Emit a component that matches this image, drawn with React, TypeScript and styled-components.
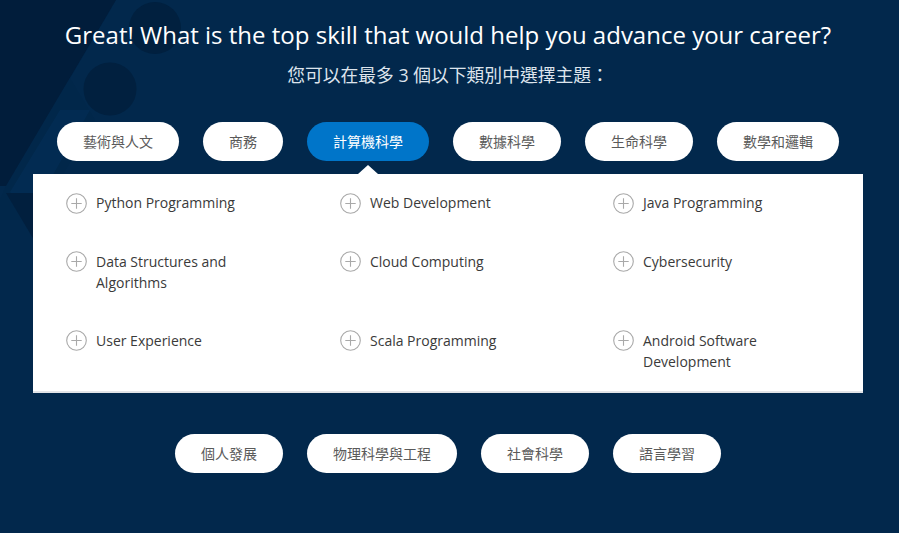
import React from "react";
import styled, { createGlobalStyle } from "styled-components";

const GlobalStyle = createGlobalStyle`
  html, body { margin: 0; padding: 0; }
  body {
    background: #02284c;
    font-family: "Open Sans", "Noto Sans CJK TC", sans-serif;
    -webkit-font-smoothing: antialiased;
  }
`;

const Page = styled.div`
  position: relative;
  width: 899px;
  height: 533px;
  overflow: hidden;
  background: #02284c;
  display: flex;
  flex-direction: column;
  align-items: center;
  padding-top: 18px;
  box-sizing: border-box;
`;

const Decor = styled.svg`
  position: absolute;
  left: 0;
  top: 0;
  pointer-events: none;
`;

const Content = styled.div`
  position: relative;
  display: flex;
  flex-direction: column;
  align-items: center;
  margin-left: -3px;
`;

const Title = styled.h1`
  margin: 0;
  color: #ffffff;
  font-family: "Open Sans", sans-serif;
  font-weight: 400;
  font-size: 24px;
  line-height: 34px;
`;

const Subtitle = styled.p`
  margin: 11px 0 0;
  color: #dde4ec;
  font-family: "Open Sans", "Noto Sans CJK TC", sans-serif;
  font-size: 17.8px;
  line-height: 24px;
`;

const PillRow = styled.div<{ $top: number }>`
  display: flex;
  gap: 24px;
  justify-content: center;
  margin-top: ${(p) => p.$top}px;
`;

const Pill = styled.button<{ $active?: boolean }>`
  position: relative;
  height: 39px;
  padding: 0 26px;
  border: none;
  border-radius: 20px;
  background: ${(p) => (p.$active ? "#0075c9" : "#ffffff")};
  color: ${(p) => (p.$active ? "#ffffff" : "#5a5a5a")};
  font-family: "Noto Sans CJK TC", sans-serif;
  font-size: 14px;
  font-weight: 400;
  line-height: 39px;
  white-space: nowrap;
  cursor: pointer;

  ${(p) =>
    p.$active &&
    `
    &::after {
      content: "";
      position: absolute;
      left: 50%;
      top: calc(100% + 4px);
      margin-left: -10px;
      border-left: 10px solid transparent;
      border-right: 10px solid transparent;
      border-bottom: 9px solid #ffffff;
    }
  `}
`;

const Panel = styled.div`
  margin-top: 13px;
  width: 830px;
  box-sizing: border-box;
  background: #ffffff;
  border-bottom: 2px solid #e2e4e8;
  padding: 18px 33px 19px;
  display: grid;
  grid-template-columns: 274px 273px 1fr;
  row-gap: 37px;
`;

const Item = styled.div`
  display: flex;
  align-items: flex-start;
  gap: 9px;
  max-width: 200px;
`;

const PlusIcon = styled.svg`
  flex: none;
  margin-top: 0.5px;
`;

const ItemText = styled.span`
  color: #3a3a3a;
  font-family: "Open Sans", sans-serif;
  font-size: 14px;
  line-height: 21px;
`;

const topCategories = [
  { label: "藝術與人文" },
  { label: "商務" },
  { label: "計算機科學", active: true },
  { label: "數據科學" },
  { label: "生命科學" },
  { label: "數學和邏輯" },
];

const bottomCategories = ["個人發展", "物理科學與工程", "社會科學", "語言學習"];

const skills = [
  "Python Programming",
  "Web Development",
  "Java Programming",
  "Data Structures and Algorithms",
  "Cloud Computing",
  "Cybersecurity",
  "User Experience",
  "Scala Programming",
  "Android Software Development",
];

const Plus = () => (
  <PlusIcon width="21" height="21" viewBox="0 0 21 21">
    <circle cx="10.5" cy="10.5" r="9.8" fill="none" stroke="#a9a9a9" strokeWidth="1.1" />
    <path d="M10.5 5.3v10.4M5.3 10.5h10.4" stroke="#a9a9a9" strokeWidth="1.1" />
  </PlusIcon>
);

export default function App() {
  return (
    <>
      <GlobalStyle />
      <Page>
        <Decor width="260" height="260" viewBox="0 0 260 260">
          <polygon points="0,0 116,0 6,186 0,186" fill="#011d3b" />
          <polygon points="116,0 70,78 95,120 36,220 0,220 0,200 6,186" fill="#02264a" opacity="0.6" />
          <polygon points="60,110 90,110 30,215 10,192" fill="#032d55" opacity="0.7" />
          <polygon points="6,193 40,193 40,250" fill="#011f3e" />
          <circle cx="155" cy="28" r="26" fill="#01203f" />
          <circle cx="110" cy="89" r="26.5" fill="#01203f" />
        </Decor>
        <Content>
          <Title>Great! What is the top skill that would help you advance your career?</Title>
          <Subtitle>您可以在最多 3 個以下類別中選擇主題：</Subtitle>
          <PillRow $top={35}>
            {topCategories.map((c) => (
              <Pill key={c.label} $active={c.active}>
                {c.label}
              </Pill>
            ))}
          </PillRow>
          <Panel>
            {skills.map((s) => (
              <Item key={s}>
                <Plus />
                <ItemText>{s}</ItemText>
              </Item>
            ))}
          </Panel>
          <PillRow $top={41}>
            {bottomCategories.map((c) => (
              <Pill key={c}>{c}</Pill>
            ))}
          </PillRow>
        </Content>
      </Page>
    </>
  );
}
